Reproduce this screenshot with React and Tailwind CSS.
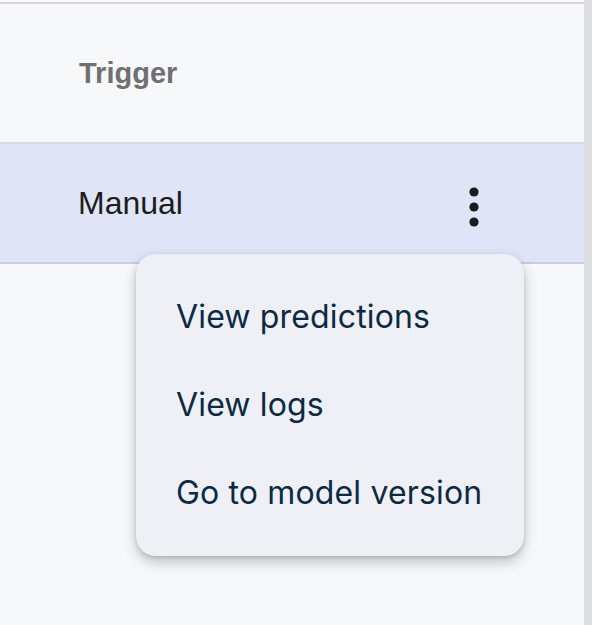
import React from "react";

export default function App() {
  return (
    <div className="relative w-[592px] h-[625px] overflow-hidden bg-[#f7f8fa] flex">
      <div className="flex-1 flex flex-col">
        <div className="h-[2px]" />
        <div className="h-[2px] bg-[#d3d6ea]" />
        <div className="h-[140px] flex items-center pl-[79px] border-b-2 border-[#dcdcdc]">
          <span className="text-[29px] font-bold text-[#707070] leading-none" style={{ fontFamily: '"Liberation Sans", Arial, sans-serif' }}>
            Trigger
          </span>
        </div>
        <div className="h-[120px] flex items-center bg-[#e0e4f7] border-b-2 border-[#c9cce0] pl-[78px] pr-[105px]">
          <span className="flex-1 text-[32px] text-[#1c1c1c] leading-none" style={{ fontFamily: '"Liberation Sans", Arial, sans-serif' }}>
            Manual
          </span>
          <svg width="10" height="40" viewBox="0 0 10 40" className="mt-[8px]">
            <circle cx="5" cy="5" r="4.6" fill="#1b1b1f" />
            <circle cx="5" cy="20" r="4.6" fill="#1b1b1f" />
            <circle cx="5" cy="35" r="4.6" fill="#1b1b1f" />
          </svg>
        </div>
      </div>
      <div className="w-[8px] bg-[#dcdde1]" />
      <div className="absolute left-[136px] top-[254px] w-[388px] rounded-[20px] bg-[#eff0f5] py-[19px] shadow-[0_6px_14px_rgba(0,0,0,0.22),0_2px_4px_rgba(0,0,0,0.12)]">
        {["View predictions", "View logs", "Go to model version"].map((t) => (
          <div key={t} className="h-[88px] leading-[88px] pl-[40px] text-[32px] tracking-[0.15px] text-[#0c2a43]" style={{ fontFamily: 'Inter, "Noto Sans", sans-serif' }}>
            {t}
          </div>
        ))}
      </div>
    </div>
  );
}
